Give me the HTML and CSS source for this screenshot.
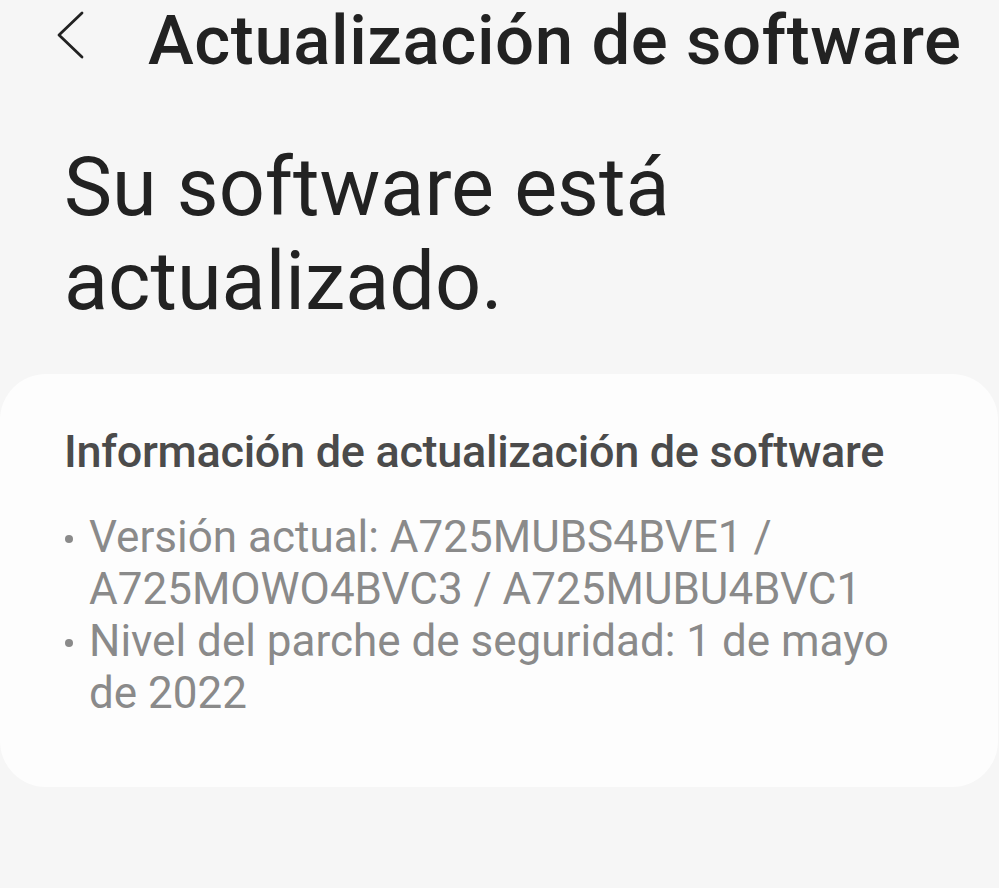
FILE: index.html
```html
<!DOCTYPE html>
<html lang="es">
<head>
    <meta charset="UTF-8">
    <meta name="viewport" content="width=device-width, initial-scale=1.0">
    <title>Actualización de software</title>
    <link rel="stylesheet" href="styles.css">
</head>
<body>
    <!-- Top bar -->
    <header class="top-bar">
        <button class="back-btn" aria-label="Atrás">
            <svg width="30" height="50" viewBox="0 0 30 50">
                <path d="M26 3 L3 25 L26 47" fill="none" stroke="#222" stroke-width="2.8" stroke-linecap="round" stroke-linejoin="round"/>
            </svg>
        </button>
        <h1 class="title">Actualización de software</h1>
    </header>

    <!-- Status -->
    <h2 class="status">Su software está<br>actualizado.</h2>

    <!-- Info card -->
    <section class="card">
        <h3 class="card-title">Información de actualización de software</h3>
        <ul class="info-list">
            <li>Versión actual: A725MUBS4BVE1 / A725MOWO4BVC3 / A725MUBU4BVC1</li>
            <li>Nivel del parche de seguridad: 1 de mayo de 2022</li>
        </ul>
    </section>
</body>
</html>
```

FILE: styles.css
```css
body {
    margin: 0;
    padding: 0;
    height: 888px;
    background: #f6f6f6;
    font-family: Roboto, 'Noto Sans', sans-serif;
    overflow: hidden;
}

/* Top bar */
.top-bar {
    display: flex;
    align-items: flex-start;
    height: 76px;
    padding-left: 56px;
}

.back-btn {
    background: none;
    border: none;
    padding: 0;
    margin-top: 10px;
    width: 92px;
    height: 50px;
    display: flex;
    align-items: center;
    cursor: pointer;
}

.title {
    margin: 0;
    font-size: 69px;
    line-height: normal;
    font-weight: 500;
    color: #222;
    letter-spacing: 0.55px;
    white-space: nowrap;
}

/* Status heading */
.status {
    margin: 65px 0 0 64px;
    font-size: 81px;
    font-weight: 400;
    line-height: 94px;
    color: #222;
}

/* Card */
.card {
    margin: 45px 1px 0 0;
    background: #fdfdfd;
    border-radius: 46px;
    padding: 51px 64px 68px 64px;
}

.card-title {
    margin: 0 0 33px 0;
    font-size: 45px;
    font-weight: 500;
    color: #4b4b4b;
    letter-spacing: -0.3px;
}

.info-list {
    list-style: none;
    margin: 0;
    padding: 0;
    font-size: 44px;
    line-height: 52px;
    color: #8a8a8a;
}

.info-list li {
    position: relative;
    padding-left: 25px;
}

.info-list li::before {
    content: "";
    position: absolute;
    left: 1px;
    top: 24px;
    width: 8px;
    height: 8px;
    border-radius: 50%;
    background: #8a8a8a;
}
```
